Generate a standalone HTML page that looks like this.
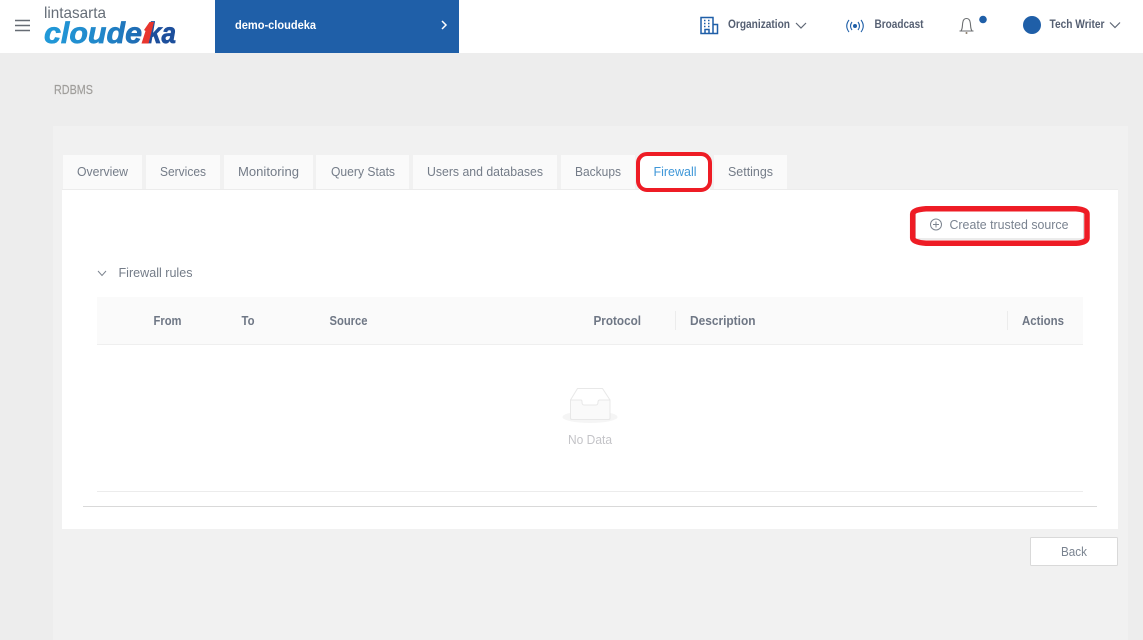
<!DOCTYPE html>
<html><head><meta charset="utf-8"><style>
html,body{margin:0;padding:0;width:1143px;height:640px;overflow:hidden;background:#ededed}
svg{display:block}
text{font-family:"Liberation Sans",sans-serif}
.t{font-size:13px;fill:#747c88}
.b{font-size:12.5px;font-weight:700;fill:#6f7785}
.n{font-size:12px;font-weight:700;fill:#555f72}
</style></head><body>
<svg width="1143" height="640" viewBox="0 0 1143 640" xmlns="http://www.w3.org/2000/svg">
<defs><linearGradient id="g" gradientUnits="userSpaceOnUse" x1="44" x2="176" y1="0" y2="0"><stop offset="0" stop-color="#219ad9"/><stop offset=".45" stop-color="#2186c9"/><stop offset="1" stop-color="#1d4f9c"/></linearGradient></defs>
<rect width="1143" height="640" fill="#ededed"/>
<rect width="1143" height="53" fill="#fff"/>
<rect x="215" width="244" height="53" fill="#1f5fa8"/>
<g stroke="#666c74" stroke-width="1.4"><path d="M15 20.500H30M15 25.500H30M15 30.500H30"/></g>
<text x="44" y="18" font-size="16" fill="#666e78" textLength="62" lengthAdjust="spacingAndGlyphs">lintasarta</text>
<text x="44" y="43" font-size="30" font-weight="700" font-style="italic" fill="url(#g)" stroke="url(#g)" stroke-width=".7" textLength="98" lengthAdjust="spacingAndGlyphs">cloude</text>
<text x="147" y="43" font-size="30" font-weight="700" font-style="italic" fill="#1d4f9c" stroke="#1d4f9c" stroke-width=".7" textLength="29" lengthAdjust="spacingAndGlyphs">ka</text>
<path d="M144 30L149.500 22H154L148.500 43.500H141.500L145.500 31Z" fill="#e8352e"/>
<text x="235" y="29" font-size="12" font-weight="700" fill="#fff" textLength="81" lengthAdjust="spacingAndGlyphs">demo-cloudeka</text>
<path d="M442 21L446 25L442 29" fill="none" stroke="#fff" stroke-width="1.5"/>

<g fill="none" stroke="#1f5fa8" stroke-width="1.500"><path d="M701 33.500V17.500H713V33.500ZM713 24.500H717.500V33.500H713M705 33.500V29.500H709V33.500"/><path d="M704 20.500h1.500M708 20.500h1.500M704 23.500h1.500M708 23.500h1.500M704 26.500h1.500M708 26.500h1.500"/></g>
<text class="n" x="728" y="28" textLength="62" lengthAdjust="spacingAndGlyphs">Organization</text>
<path d="M796 23L801 28L806 23" fill="none" stroke="#5f6775" stroke-width="1.2"/>
<g fill="none" stroke="#1f5fa8" stroke-width="1.100"><path d="M849 20Q844.500 26 849 32M852 22Q849 26 852 30M861 20Q865.500 26 861 32M858 22Q861 26 858 30"/></g><circle cx="855" cy="26" r="2" fill="#1f5fa8"/>
<text class="n" x="874.500" y="28" textLength="49" lengthAdjust="spacingAndGlyphs">Broadcast</text>
<path d="M959.500 31H973.500M961 31C963 28 962 25 963 21.500C964 17.500 969 17.500 970 21.500C971 25 970 28 972 31" fill="none" stroke="#6b6e70" stroke-width="1.100"/><circle cx="966.500" cy="33" r="1" fill="#8a7a68"/>
<circle cx="983" cy="19.500" r="3.800" fill="#1f5fa8"/>
<circle cx="1032" cy="25" r="9" fill="#1f5fa8"/>
<text class="n" x="1049.500" y="28" textLength="55" lengthAdjust="spacingAndGlyphs">Tech Writer</text>
<path d="M1110 22.500L1115 27.500L1120 22.500" fill="none" stroke="#5f6775" stroke-width="1.2"/>

<text x="54" y="94" font-size="13" fill="#a09e9b" stroke="#a09e9b" stroke-width=".2" textLength="39" lengthAdjust="spacingAndGlyphs">RDBMS</text>

<rect x="53" y="126" width="1075" height="514" fill="#f1f1f1"/>
<rect x="62" y="190" width="1056" height="339" fill="#fff"/>
<rect x="62" y="189" width="1056" height="1" fill="#ececec"/>

<g fill="#fafafa">
<rect x="63" y="155" width="79" height="34"/>
<rect x="146" y="155" width="74" height="34"/>
<rect x="224" y="155" width="89" height="34"/>
<rect x="316" y="155" width="93" height="34"/>
<rect x="413" y="155" width="144" height="34"/>
<rect x="561" y="155" width="74" height="34"/>
<rect x="714" y="155" width="73" height="34"/>
</g>
<rect x="639" y="155" width="71" height="35" fill="#fff"/>
<text class="t" x="77" y="176" textLength="51" lengthAdjust="spacingAndGlyphs">Overview</text>
<text class="t" x="160" y="176" textLength="46" lengthAdjust="spacingAndGlyphs">Services</text>
<text class="t" x="238" y="176" textLength="61" lengthAdjust="spacingAndGlyphs">Monitoring</text>
<text class="t" x="331" y="176" textLength="64" lengthAdjust="spacingAndGlyphs">Query Stats</text>
<text class="t" x="427" y="176" textLength="116" lengthAdjust="spacingAndGlyphs">Users and databases</text>
<text class="t" x="575" y="176" textLength="46" lengthAdjust="spacingAndGlyphs">Backups</text>
<text x="653.500" y="176" font-size="13" fill="#3f97d8" textLength="43" lengthAdjust="spacingAndGlyphs">Firewall</text>
<text class="t" x="728" y="176" textLength="45" lengthAdjust="spacingAndGlyphs">Settings</text>
<rect x="638" y="154" width="72" height="36" rx="9" fill="none" stroke="#ee1c25" stroke-width="4"/>

<rect x="915.500" y="209.500" width="168" height="29.500" fill="#fff" stroke="#d8d8d8"/>
<circle cx="936" cy="224.500" r="5.500" fill="none" stroke="#7d8590" stroke-width="1"/>
<path d="M933 224.500H939M936 221.500V227.500" stroke="#7d8590" stroke-width="1"/>
<text x="949.500" y="229" font-size="12.500" fill="#7a8390" textLength="119" lengthAdjust="spacingAndGlyphs">Create trusted source</text>
<path d="M926 208.700H1076Q1087 209.500 1087 214V238Q1087 242.500 1076 243.300H926Q913 242.500 912.700 238V214Q913 209.500 926 208.700Z" fill="none" stroke="#ee1c25" stroke-width="5.500"/>

<path d="M98 271L102 275.500L106 271" fill="none" stroke="#7d8590" stroke-width="1"/>
<text class="t" x="118.500" y="277" textLength="74" lengthAdjust="spacingAndGlyphs">Firewall rules</text>

<rect x="97" y="297" width="986" height="47" fill="#fafafa"/>
<rect x="97" y="344" width="986" height="1" fill="#efefef"/>
<rect x="675" y="311" width="1" height="19" fill="#ececec"/>
<rect x="1007" y="311" width="1" height="19" fill="#ececec"/>
<text class="b" x="153.500" y="325" textLength="28" lengthAdjust="spacingAndGlyphs">From</text>
<text class="b" x="241.500" y="325" textLength="13" lengthAdjust="spacingAndGlyphs">To</text>
<text class="b" x="329.500" y="325" textLength="38" lengthAdjust="spacingAndGlyphs">Source</text>
<text class="b" x="593.500" y="325" textLength="47.500" lengthAdjust="spacingAndGlyphs">Protocol</text>
<text class="b" x="690" y="325" textLength="65.500" lengthAdjust="spacingAndGlyphs">Description</text>
<text class="b" x="1022" y="325" textLength="42" lengthAdjust="spacingAndGlyphs">Actions</text>

<ellipse cx="590" cy="417" rx="27.500" ry="6" fill="#f5f5f5"/>
<path d="M570.500 400L577.500 388.500H602.500L610 400V418Q610 419.500 608.500 419.500H572Q570.500 419.500 570.500 418Z" fill="#fff" stroke="#e8e8e8"/>
<path d="M570.500 400H581Q582 400 582 402Q582 405 584 405H596Q598 405 598 402Q598 400 600 400H610V418Q610 419.500 608.500 419.500H572Q570.500 419.500 570.500 418Z" fill="#fafafa" stroke="#e8e8e8"/>
<text x="568" y="444" font-size="12.500" fill="#c4c4c8" textLength="44" lengthAdjust="spacingAndGlyphs">No Data</text>

<rect x="97" y="491" width="986" height="1" fill="#ececec"/>
<rect x="83" y="506" width="1014" height="1" fill="#d9d9d9"/>

<rect x="1030.500" y="537.500" width="87" height="28" rx="1" fill="#fff" stroke="#d9d9d9"/>
<text x="1061" y="556" font-size="12.500" fill="#7a8390" textLength="26" lengthAdjust="spacingAndGlyphs">Back</text>
</svg>
</body></html>
